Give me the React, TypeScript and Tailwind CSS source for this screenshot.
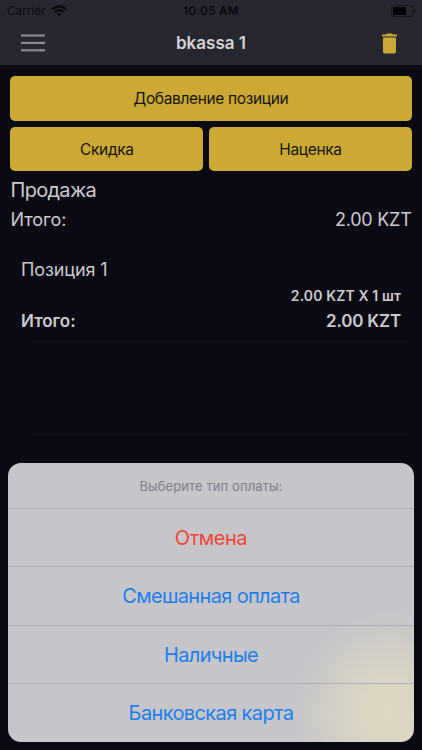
import React from "react";

const options = [
  { label: "Отмена", style: "h-[58px] tracking-[-0.45px] text-[#f0443b]" },
  { label: "Смешанная оплата", style: "h-[59px] tracking-[-0.65px] text-[#1e7fea]" },
  { label: "Наличные", style: "h-[58px] tracking-[-0.65px] text-[#1e7fea]" },
  { label: "Банковская карта", style: "h-[59px] tracking-[-0.62px] text-[#1e7fea]" },
];

const StatusBar = () => (
  <div className="relative flex h-[22px] items-center justify-between pl-[7px] pr-[6px] text-[#08080c]">
    <div className="flex items-center gap-[5px]">
      <span className="text-[11.5px] leading-[22px] tracking-[0.15px]">Carrier</span>
      <svg width="16" height="12" viewBox="0 0 16 12" fill="none" stroke="currentColor" strokeWidth="2.1">
        <path d="M1 4.2a10 10 0 0 1 14 0" />
        <path d="M3.6 7a6.2 6.2 0 0 1 8.8 0" />
        <path d="M8 11.6 5.7 9.2a3.3 3.3 0 0 1 4.6 0z" fill="currentColor" stroke="none" />
      </svg>
    </div>
    <span className="absolute inset-x-0 pt-px text-center text-[11.5px] font-semibold tracking-[0.35px]">10:05 AM</span>
    <svg width="25" height="12" viewBox="0 0 25 12">
      <rect x="0.5" y="0.5" width="21.5" height="11" rx="3" fill="none" stroke="#15151c" />
      <rect x="2" y="2" width="13" height="8" rx="1.5" fill="#000" />
      <path d="M23.2 4v4c1.6-.7 1.6-3.3 0-4z" fill="#15151c" />
    </svg>
  </div>
);

const NavBar = () => (
  <div className="relative flex h-[43px] items-center justify-between pl-[21px] pr-[25px]">
    <svg className="-mt-[2px]" width="24" height="18" viewBox="0 0 24 18" fill="#8b8a90">
      <rect y="0.4" width="24" height="2.2" />
      <rect y="7.8" width="24" height="2.2" />
      <rect y="15.2" width="24" height="2.2" />
    </svg>
    <h1 className="absolute inset-x-0 text-center text-[17px] font-semibold text-[#d3d3d6]">bkassa 1</h1>
    <svg className="-mt-px" width="15" height="21" viewBox="0 0 15 21" fill="#cba934">
      <path d="M0 1.600h4.200L5 .5h5l.8 1.100H15v2H0z" />
      <path d="M1 3.500h13v1.400H1z" fill="#6d5e30" />
      <path d="M1 4.800h13v13.900a1.800 1.800 0 0 1-1.800 1.800H2.800A1.800 1.800 0 0 1 1 18.700z" />
    </svg>
  </div>
);

const App = () => {
  return (
    <div className="relative h-[750px] w-[422px] overflow-hidden bg-[#0a0a13] font-['Inter',sans-serif] text-[#cbcbce]">
      <header className="h-[65px] bg-[#272730]">
        <StatusBar />
        <NavBar />
      </header>

      <main>
        {/* Actions */}
        <div className="flex flex-col gap-[6px] pl-[10.4px] pr-[10.4px] pt-[11px] text-[15.5px] tracking-[-0.35px] text-[#16130a]">
          <button className="h-[44.5px] rounded-[5px] bg-[#cba934]">Добавление позиции</button>
          <div className="flex gap-[6px]">
            <button className="h-[44.5px] w-[193px] rounded-[5px] bg-[#cba934] pt-px">Скидка</button>
            <button className="h-[44.5px] flex-1 rounded-[5px] bg-[#cba934] pt-px">Наценка</button>
          </div>
        </div>

        {/* Totals */}
        <div className="px-[10.5px] pt-[5px]">
          <h2 className="text-[20px] leading-[28px] tracking-[-0.7px]">Продажа</h2>
          <div className="flex justify-between text-[18px] leading-[31px] tracking-[-0.25px]">
            <span className="tracking-[-0.05px]">Итого:</span>
            <span>2.00 KZT</span>
          </div>
        </div>

        {/* Position */}
        <div className="px-[21px] pt-[21px]">
          <div className="text-[18px] leading-[28px] tracking-[-0.1px]">Позиция 1</div>
          <div className="text-right text-[14px] font-semibold leading-[24px] tracking-[0.12px]">2.00 KZT X 1 шт</div>
          <div className="flex justify-between text-[17px] font-semibold leading-[26px]">
            <span>Итого:</span>
            <span className="tracking-[-0.2px]">2.00 KZT</span>
          </div>
        </div>
        <div className="ml-[31px] mr-[11px] mt-[7px] h-[94px] border-y border-[#10101a]" />
      </main>

      {/* Payment type sheet */}
      <section className="absolute left-[8.4px] top-[463px] w-[405.2px] overflow-hidden rounded-[13px] bg-[#c6c5ca] bg-[radial-gradient(ellipse_100px_105px_at_382px_250px,#ded7c2_0%,#dad5c4_30%,#d1cec6_60%,#c9c8c9_85%,#c6c5ca_100%)] text-center">
        <p className="h-[45px] text-[13px] leading-[46px] tracking-[0.1px] text-[#818086]">Выберите тип оплаты:</p>
        {options.map((option) => (
          <button
            key={option.label}
            className={`block w-full border-t border-[#b0afb4] text-[20px] ${option.style}`}
          >
            {option.label}
          </button>
        ))}
      </section>
    </div>
  );
};

export default App;
